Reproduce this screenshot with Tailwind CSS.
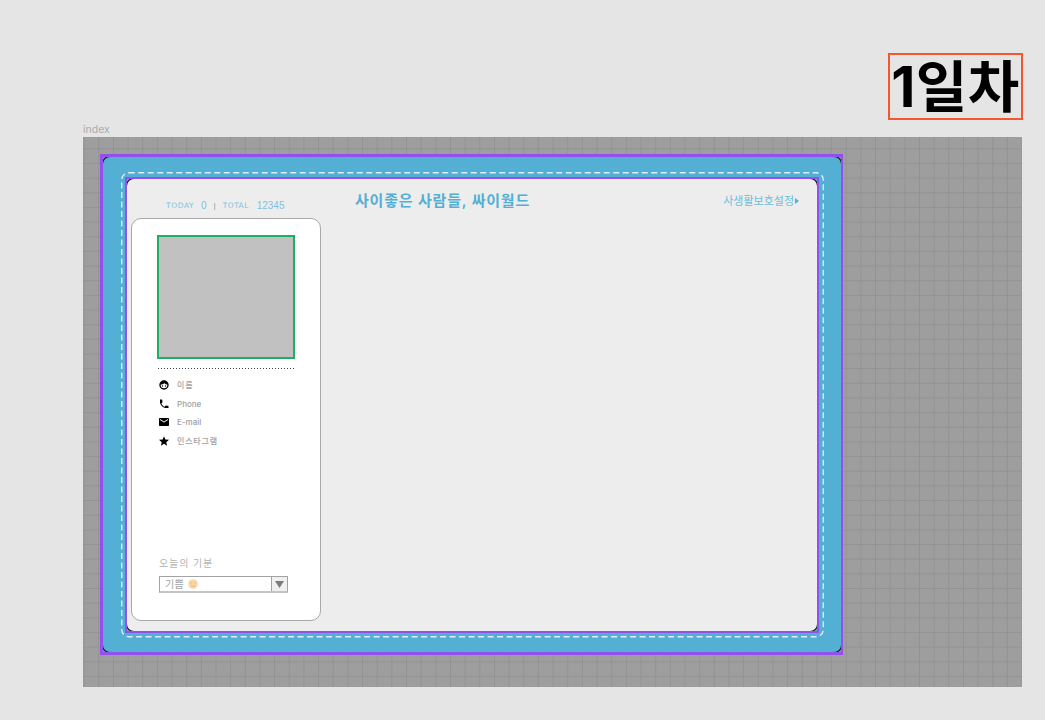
<!DOCTYPE html>
<html lang="ko">
<head>
  <meta charset="UTF-8">
  <title>1일차</title>
  <script src="https://cdn.jsdelivr.net/npm/@tailwindcss/browser@4"></script>
</head>
<body class="bg-[#e5e5e5] w-[1045px] h-[720px] overflow-hidden font-['Inter','Noto_Sans_CJK_KR',sans-serif]">
  <!-- day title -->
  <div class="flex justify-end pt-[53px] pr-[22px]">
    <h1 class="w-[135px] h-[67px] border-2 border-[#f2572f] whitespace-nowrap text-[56px] leading-[65px] font-bold text-black text-center tracking-[0.5px]">1일차</h1>
  </div>

  <div class="pl-[83px] w-[1022px]">
    <p class="h-[17px] text-[10.5px] leading-[19px] text-[#ababab]">index</p>

    <!-- grid canvas -->
    <div class="h-[550px] pt-[17px] pl-[17px] bg-[#9e9e9e] bg-[linear-gradient(#939393_1px,transparent_1px),linear-gradient(90deg,#939393_1px,transparent_1px)] bg-[size:14.67px_14.67px] bg-[position:0.6px_11.3px]">

      <!-- outer frame -->
      <div class="w-[743px] h-[501px] border-[3px] border-r-2 border-[#9350ec] bg-[#8f8f8f] overflow-hidden">
        <div class="relative h-full rounded-[7px] bg-[#53afd3] shadow-[0_0_0_1px_#111] pt-[20px] pl-[22px]">
          <svg class="absolute left-[18px] top-[15px]" width="703" height="466" fill="none">
            <rect x="0.75" y="0.75" width="701.5" height="464" rx="7" stroke="#dff1f8" stroke-width="1.3" stroke-dasharray="6 3.5"/>
          </svg>

          <!-- inner frame -->
          <div class="w-[694px] h-[456px] border-2 border-[#9350ec] bg-[#53afd3] overflow-hidden">
            <div class="h-full rounded-[7px] bg-[#ededed] shadow-[0_0_0_1px_#111] pl-[4px] pr-[18px] flex flex-col">

              <!-- top bar -->
              <div class="h-[39px] flex text-[#62b9da]">
                <div class="w-[190px] pt-[17px] pl-[35px] flex items-center h-[36px] text-[10px] leading-[14px] font-['Liberation_Sans',sans-serif] text-[#7cc4de]">
                  <span class="w-[31px] font-['DejaVu_Sans',sans-serif] text-[7.5px] tracking-[0.6px] whitespace-nowrap">TODAY</span>
                  <span class="ml-[4px]">0</span>
                  <span class="ml-[7px] text-[8px] text-[#5a9db8]">|</span>
                  <span class="ml-[7px] w-[29px] font-['DejaVu_Sans',sans-serif] text-[7.5px] tracking-[0.5px] whitespace-nowrap">TOTAL</span>
                  <span class="ml-[5px]">12345</span>
                </div>
                <h2 class="ml-[34px] pt-[11px] text-[15px] leading-[22px] font-semibold tracking-[0.8px] text-[#53afd3]">사이좋은 사람들, 싸이월드</h2>
                <a class="ml-auto pt-[13px] flex items-start text-[11px] leading-[18px] text-[#6cbddc]">사생활보호설정<svg class="mt-[6px] ml-[1px]" width="4" height="6" viewBox="0 0 4 6"><path d="M0 0l4 3-4 3z" fill="#53afd3"/></svg></a>
              </div>

              <!-- profile card -->
              <aside class="w-[190px] h-[403px] rounded-[10px] bg-white border border-[#a9a9a9] pt-[16px] pl-[25px] flex flex-col">
                <div class="w-[138px] h-[124px] bg-[#c1c1c1] border-2 border-[#1fae62]"></div>
                <div class="w-[137px] h-px mt-[9px] ml-[1px] bg-[repeating-linear-gradient(90deg,#444_0_1px,transparent_1px_3px)]"></div>

                <ul class="mt-[7px] pl-[2px] flex flex-col text-[8px] font-medium text-[#a0a0a0]">
                  <li class="h-[18.5px] flex items-center gap-[8px]">
                    <svg class="w-[10px] h-[10px]" viewBox="0 0 10 10">
                      <circle cx="5" cy="5" r="4" fill="#fff" stroke="#000" stroke-width="1.4"/>
                      <path d="M1 4.600C1.500 1.500 3.500.8 5 .8s3.500.7 4 3.800C7.500 4.600 6 4 5.500 3 4.800 4 3 4.600 1 4.600z" fill="#000"/>
                      <circle cx="3.500" cy="6" r=".7" fill="#000"/><circle cx="6.500" cy="6" r=".7" fill="#000"/>
                    </svg>
                    <span class="tracking-[0.8px]">이름</span>
                  </li>
                  <li class="h-[18.5px] flex items-center gap-[8px]">
                    <svg class="w-[10px] h-[10px] p-[0.5px]" viewBox="3 3 18 18"><path fill="#000" d="M6.600 10.800c1.400 2.800 3.800 5.100 6.600 6.600l2.200-2.200c.3-.3.700-.4 1-.2 1.100.4 2.300.6 3.600.6.600 0 1 .4 1 1V20c0 .6-.4 1-1 1C10.600 21 3 13.400 3 4c0-.6.400-1 1-1h3.500c.6 0 1 .4 1 1 0 1.300.2 2.500.6 3.600.1.300 0 .7-.2 1z"/></svg>
                    <span>Phone</span>
                  </li>
                  <li class="h-[18.5px] flex items-center gap-[8px]">
                    <svg class="w-[10px] h-[8px]" viewBox="2 4 20 16" preserveAspectRatio="none"><path fill="#000" d="M20 4H4c-1.100 0-2 .9-2 2v12c0 1.100.9 2 2 2h16c1.100 0 2-.9 2-2V6c0-1.100-.9-2-2-2zm0 4l-8 5-8-5V6l8 5 8-5z"/></svg>
                    <span>E-mail</span>
                  </li>
                  <li class="h-[18.5px] flex items-center gap-[8px]">
                    <svg class="w-[10px] h-[10px]" viewBox="2 2 20 19.500"><path fill="#000" d="M12 17.300l6.200 3.700-1.600-7L22 9.200l-7.200-.6L12 2 9.200 8.600 2 9.200 7.500 14l-1.700 7z"/></svg>
                    <span class="tracking-[0.8px]">인스타그램</span>
                  </li>
                </ul>

                <div class="mt-auto pb-[27px] pl-[2px]">
                  <p class="text-[10px] leading-[14px] tracking-[0.9px] text-[#b3b3b3] translate-y-[1px]">오늘의 기분</p>
                  <div class="mt-[7px] w-[129px] h-[17px] flex border border-[#a3a3a3] border-b-2 border-b-[#c4c4c4] text-[10px] leading-[15px] text-[#a3a3a3]">
                    <span class="flex-1 pl-[5px] flex items-center gap-[4px] tracking-[0.4px]">기쁨
                      <svg width="10" height="10" viewBox="0 0 10 10"><circle cx="5" cy="5" r="4.800" fill="#f7d8a2"/><path d="M2.500 4h1.500M6 4h1.500M3 6.500c1 1 3 1 4 0" stroke="#dcae70" stroke-width=".7" fill="none"/></svg>
                    </span>
                    <span class="w-[16px] flex items-center justify-center border-l border-[#a3a3a3] bg-[#f0f0f0]"><svg width="9" height="7" viewBox="0 0 9 7"><path d="M0 0h9L4.500 7z" fill="#7b7b7b"/></svg></span>
                  </div>
                </div>
              </aside>
            </div>
          </div>
        </div>
      </div>
    </div>
  </div>
</body>
</html>
